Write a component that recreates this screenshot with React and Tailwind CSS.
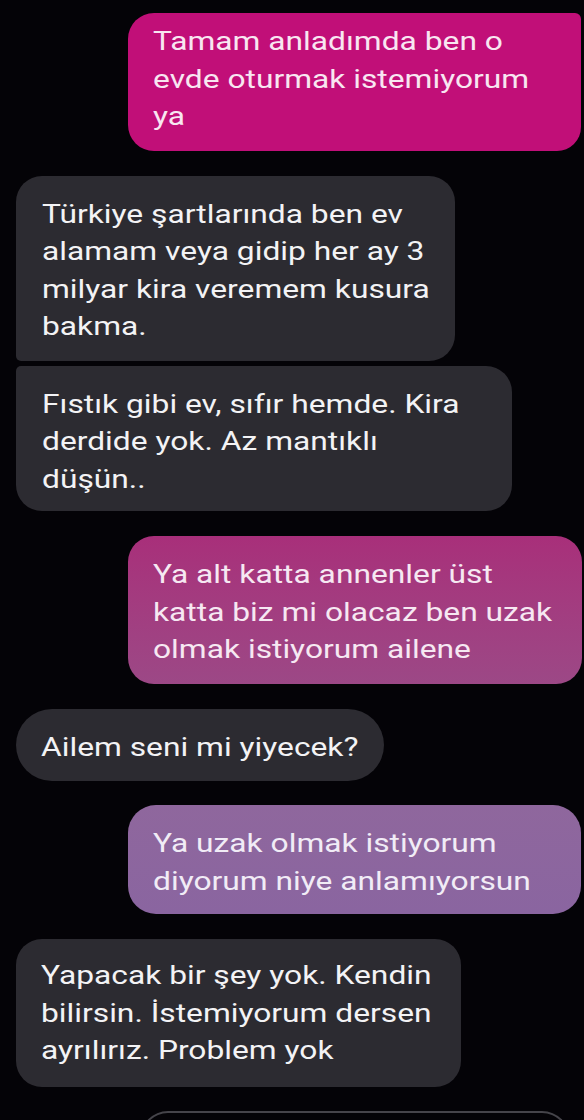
function T({ children }) {
  return <span className="block origin-left scale-x-[1.27] whitespace-nowrap">{children}</span>;
}

export default function App() {
  const font = { fontFamily: 'Roboto, "Noto Sans", sans-serif' };
  const gray = "bg-[#2c2b31] text-[#f3f3f5]";
  return (
    <div
      className="w-[584px] h-[1120px] overflow-hidden bg-[#040307] flex flex-col text-[25px] leading-[37.5px]"
      style={font}
    >
      <div className="mt-[13px] ml-[128px] w-[453px] rounded-tl-[26px] rounded-bl-[26px] rounded-br-[24px] rounded-tr-[6px] bg-[#c10f78] text-[#f8e6f1] pl-[25px] pt-[10px] pb-[15px]">
        <T>Tamam anladımda ben o<br />evde oturmak istemiyorum<br />ya</T>
      </div>

      <div className={`mt-[25px] ml-[16px] w-[439px] rounded-t-[26px] rounded-br-[26px] rounded-bl-[5px] ${gray} pl-[26px] pt-[20px] pb-[15px]`}>
        <T>Türkiye şartlarında ben ev<br />alamam veya gidip her ay 3<br />milyar kira veremem kusura<br />bakma.</T>
      </div>

      <div className={`mt-[5px] ml-[16px] w-[496px] rounded-tl-[5px] rounded-tr-[26px] rounded-b-[26px] ${gray} pl-[26px] pt-[20px] pb-[13px]`}>
        <T>Fıstık gibi ev, sıfır hemde. Kira<br />derdide yok. Az mantıklı<br />düşün..</T>
      </div>

      <div className="mt-[25px] ml-[128px] w-[454px] rounded-[26px] bg-gradient-to-b from-[#a82f7a] to-[#9c4886] text-[#f6e8f2] pl-[25px] pt-[20px] pb-[15px]">
        <T>Ya alt katta annenler üst<br />katta biz mi olacaz ben uzak<br />olmak istiyorum ailene</T>
      </div>

      <div className={`mt-[25px] ml-[16px] w-[368px] rounded-[36px] ${gray} pl-[25px] pt-[20px] pb-[15px]`}>
        <T>Ailem seni mi yiyecek?</T>
      </div>

      <div className="mt-[24px] ml-[128px] w-[453px] rounded-[28px] bg-gradient-to-b from-[#8f679d] to-[#8a65a0] text-[#f1ecf6] pl-[25px] pt-[20px] pb-[14px]">
        <T>Ya uzak olmak istiyorum<br />diyorum niye anlamıyorsun</T>
      </div>

      <div className={`mt-[25px] ml-[16px] w-[445px] rounded-[26px] ${gray} pl-[25px] pt-[18px] pb-[17px]`}>
        <T>Yapacak bir şey yok. Kendin<br />bilirsin. İstemiyorum dersen<br />ayrılırız. Problem yok</T>
      </div>

      <div className="mt-[24px] ml-[140px] w-[430px] h-[60px] shrink-0 rounded-t-[28px] border-2 border-b-0 border-[#45444a]" />
    </div>
  );
}
